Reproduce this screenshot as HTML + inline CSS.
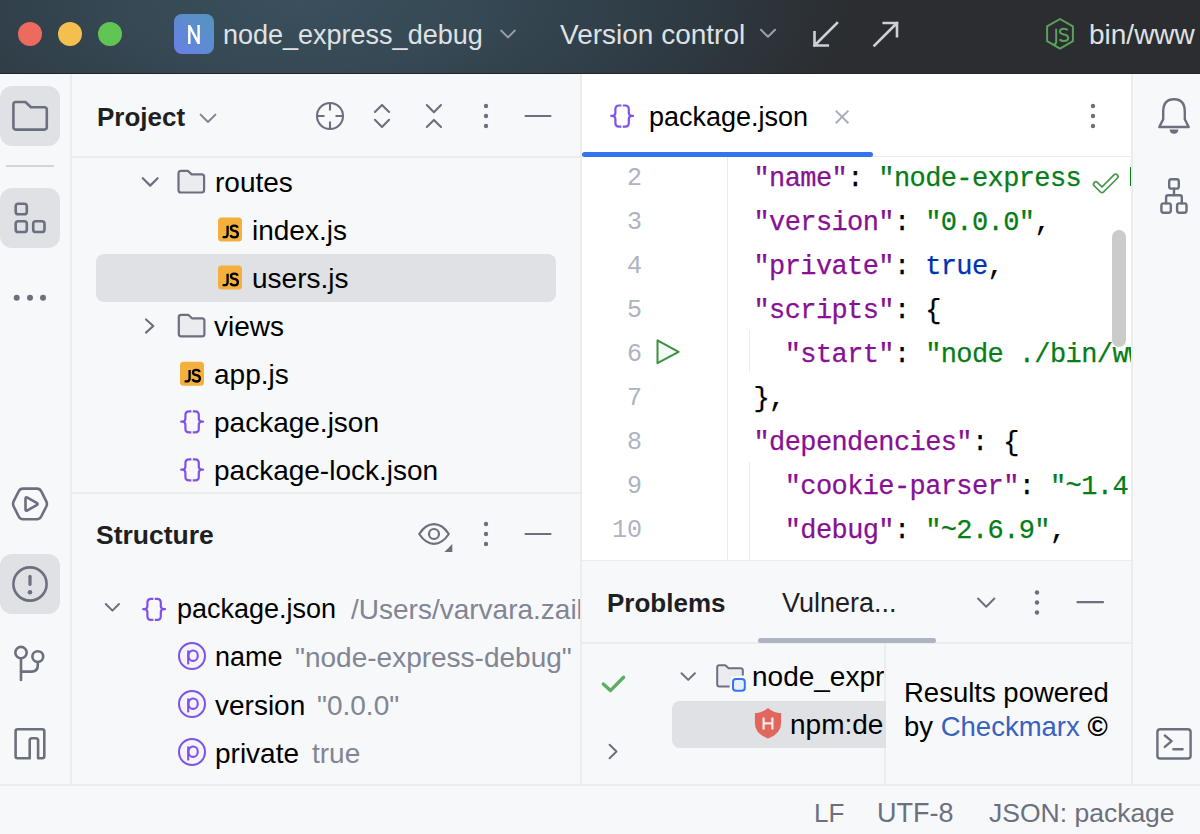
<!DOCTYPE html>
<html><head><meta charset="utf-8">
<style>
*{margin:0;padding:0;box-sizing:border-box}
html,body{width:1200px;height:834px;overflow:hidden;background:#f7f8fa;font-family:"Liberation Sans",sans-serif}
.a{position:absolute}
.t{position:absolute;white-space:nowrap;font-size:28px;line-height:1;color:#000}
.m{font-family:"Liberation Mono",monospace;font-size:27px;letter-spacing:-0.6px;white-space:pre;-webkit-text-stroke:0.25px currentColor}
.b{font-weight:bold;color:#1e1f22}
.g{color:#818594}
.lt{color:#dfe1e5}
#tgrad{left:0;top:0;width:1200px;height:73px;background:radial-gradient(ellipse 560px 230px at 300px 0px,#3a505c 0%,#364955 30%,#2f3c45 65%,#2b2d30 100%)}
.tl{position:absolute;top:22px;width:24px;height:24px;border-radius:50%}
.sel{position:absolute;background:#dfe1e5;border-radius:8px}
.code{position:absolute;left:582px;top:157px;width:549px;height:403px;overflow:hidden;background:#fff}
.ln{position:absolute;left:0;width:60px;text-align:right;color:#aeb3c2;font-size:25px!important;letter-spacing:0!important;-webkit-text-stroke:0!important}
.k{color:#871094}.s{color:#067d17}.kw{color:#0033b3}
</style></head><body>
<!-- ===== title bar ===== -->
<div class="a" style="left:0;top:0;width:1200px;height:74px;background:#2b2d30"></div>
<div id="tgrad" class="a"></div>
<div class="a" style="left:0;top:73px;width:1200px;height:1px;background:#232528"></div>
<div class="tl" style="left:18px;background:#ed6a5e"></div>
<div class="tl" style="left:58px;background:#f5bf4f"></div>
<div class="tl" style="left:98px;background:#61c554"></div>
<div class="a" style="left:174px;top:14px;width:40px;height:40px;border-radius:8px;background:linear-gradient(45deg,#6a80e6,#5296bd)"></div>

<div class="t lt" style="left:223px;top:22px;font-size:27px">node_express_debug</div>
<div class="t lt" style="left:560px;top:21px;font-size:28px">Version control</div>
<div class="t lt" style="left:1089px;top:21px;font-size:28px">bin/www</div>

<!-- ===== structural borders ===== -->
<div class="a" style="left:70px;top:74px;width:2px;height:711px;background:#ebecf0"></div>
<div class="a" style="left:580px;top:74px;width:2px;height:711px;background:#ebecf0"></div>
<div class="a" style="left:582px;top:74px;width:549px;height:486px;background:#fff"></div>
<div class="a" style="left:1131px;top:74px;width:2px;height:711px;background:#ebecf0"></div>
<div class="a" style="left:0;top:784px;width:1200px;height:2px;background:#ebecf0"></div>
<!-- project header bottom border -->
<div class="a" style="left:72px;top:156px;width:508px;height:2px;background:#ebecf0"></div>
<!-- structure top border -->
<div class="a" style="left:72px;top:492px;width:508px;height:2px;background:#ebecf0"></div>
<!-- editor tab bar bottom border -->
<div class="a" style="left:582px;top:156px;width:549px;height:1px;background:#ebecf0"></div>
<!-- problems top border -->
<div class="a" style="left:582px;top:559px;width:549px;height:2px;background:#ebecf0"></div>
<div class="a" style="left:582px;top:561px;width:549px;height:223px;background:#f7f8fa"></div>
<div class="a" style="left:582px;top:642px;width:549px;height:2px;background:#ebecf0"></div>
<div class="a" style="left:884px;top:644px;width:2px;height:140px;background:#ebecf0"></div>

<!-- ===== tool buttons ===== -->
<div class="sel" style="left:0;top:86px;width:60px;height:60px;border-radius:12px"></div>
<div class="a" style="left:6px;top:165px;width:48px;height:2px;background:#d3d5db"></div>
<div class="sel" style="left:0;top:188px;width:60px;height:60px;border-radius:12px"></div>
<div class="sel" style="left:0;top:554px;width:60px;height:60px;border-radius:12px"></div>

<!-- ===== project panel ===== -->
<div class="t b" style="left:97px;top:104px;font-size:26px">Project</div>
<div class="sel" style="left:96px;top:254px;width:460px;height:48px"></div>
<div class="t" style="left:215px;top:169px">routes</div>
<div class="t" style="left:252px;top:217px">index.js</div>
<div class="t" style="left:252px;top:265px">users.js</div>
<div class="t" style="left:214px;top:313px">views</div>
<div class="t" style="left:214px;top:361px">app.js</div>
<div class="t" style="left:214px;top:409px">package.json</div>
<div class="t" style="left:214px;top:457px">package-lock.json</div>



<!-- ===== editor tab ===== -->
<div class="t" style="left:649px;top:104px;font-size:27px">package.json</div>
<div class="a" style="left:582px;top:152px;width:291px;height:5px;border-radius:3px;background:#3574f0"></div>
<!-- ===== code ===== -->
<div class="code">
 <div class="a" style="left:145px;top:0;width:1px;height:403px;background:#ebecf0"></div>
 <div class="a" style="left:167px;top:173px;width:1px;height:43px;background:#ebecf0"></div>
 <div class="a" style="left:167px;top:305px;width:1px;height:98px;background:#ebecf0"></div>
 <div class="t m ln" style="top:9px">2</div>
 <div class="t m ln" style="top:53px">3</div>
 <div class="t m ln" style="top:97px">4</div>
 <div class="t m ln" style="top:141px">5</div>
 <div class="t m ln" style="top:185px">6</div>
 <div class="t m ln" style="top:229px">7</div>
 <div class="t m ln" style="top:273px">8</div>
 <div class="t m ln" style="top:317px">9</div>
 <div class="t m ln" style="top:361px">10</div>
 <div class="t m" style="left:171.5px;top:9px"><span class="k">"name"</span>: <span class="s">"node-express</span></div>
 <div class="t m" style="left:171.5px;top:53px"><span class="k">"version"</span>: <span class="s">"0.0.0"</span>,</div>
 <div class="t m" style="left:171.5px;top:97px"><span class="k">"private"</span>: <span class="kw">true</span>,</div>
 <div class="t m" style="left:171.5px;top:141px"><span class="k">"scripts"</span>: {</div>
 <div class="t m" style="left:171.5px;top:185px">  <span class="k">"start"</span>: <span class="s">"node ./bin/www"</span>,</div>
 <div class="t m" style="left:171.5px;top:229px">},</div>
 <div class="t m" style="left:171.5px;top:273px"><span class="k">"dependencies"</span>: {</div>
 <div class="t m" style="left:171.5px;top:317px">  <span class="k">"cookie-parser"</span>: <span class="s">"~1.4.4"</span>,</div>
 <div class="t m" style="left:171.5px;top:361px">  <span class="k">"debug"</span>: <span class="s">"~2.6.9"</span>,</div>
 <div class="a" style="left:548px;top:10px;width:3px;height:19px;background:#067d17"></div>
 <div class="a" style="left:530px;top:73px;width:14px;height:117px;border-radius:7px;background:#cbcbcb"></div>
</div>


<!-- ===== structure panel ===== -->
<div class="t b" style="left:96px;top:522px;font-size:26.5px">Structure</div>
<div class="t" style="left:177px;top:596px;font-size:27px">package.json</div>
<div class="t g" style="left:351px;top:596px;width:229px;overflow:hidden;font-size:28px">/Users/varvara.zaikina/node_express_debug</div>
<div class="t" style="left:215px;top:644px;font-size:27px">name</div>
<div class="t g" style="left:295px;top:644px;font-size:28px">"node-express-debug"</div>
<div class="t" style="left:215px;top:692px">version</div>
<div class="t g" style="left:317px;top:692px">"0.0.0"</div>
<div class="t" style="left:215px;top:740px">private</div>
<div class="t g" style="left:312px;top:740px">true</div>
<!-- ===== problems panel ===== -->
<div class="t b" style="left:607px;top:590px;font-size:26px">Problems</div>
<div class="t" style="left:782px;top:590px;font-size:27px;color:#1e1f22">Vulnera...</div>
<div class="a" style="left:758px;top:638px;width:178px;height:5px;border-radius:3px;background:#aeb3c2"></div>
<div class="sel" style="left:672px;top:701px;width:220px;height:47px"></div>
<div class="a" style="left:752px;top:660px;width:132px;height:40px;overflow:hidden"><div class="t" style="left:0;top:3px">node_express_debug</div></div>
<div class="a" style="left:790px;top:705px;width:94px;height:42px;overflow:hidden"><div class="t" style="left:0;top:6px">npm:debug</div></div>
<div class="a" style="left:886px;top:644px;width:245px;height:140px;background:#f7f8fa"></div>
<div class="t" style="left:904px;top:679px;font-size:27.5px;color:#000">Results powered</div>
<div class="t" style="left:904px;top:713px;font-size:27.5px;color:#000">by <span style="color:#3862bd">Checkmarx</span> <b>©</b></div>
<!-- ===== status bar ===== -->
<div class="t" style="left:814px;top:800px;font-size:26px;color:#6c707e">LF</div>
<div class="t" style="left:877px;top:800px;font-size:27px;color:#6c707e">UTF-8</div>
<div class="t" style="left:989px;top:800px;font-size:26.5px;color:#6c707e">JSON: package</div>

<!-- ===== icon overlay ===== -->
<svg class="a" style="left:0;top:0" width="1200" height="834" viewBox="0 0 1200 834">
<!-- title bar icons -->
<path d="M189.3,44 V25 M198.6,44 V25 M189.3,25.5 L198.6,43.5" stroke="#fff" stroke-width="2.5" fill="none"/>
<g fill="none" stroke="#9da0a8" stroke-width="2" stroke-linecap="round" stroke-linejoin="round">
 <path d="M501.2,30.6 L508,37.4 L514.8,30.6"/>
 <path d="M761,29.8 L768,36.8 L775,29.8"/>
</g>
<g fill="none" stroke="#ced0d6" stroke-width="2.6" stroke-linecap="square" stroke-linejoin="miter">
 <path d="M837,23 L814.5,45.5 M814.5,32.2 V45.5 H827.8"/>
 <path d="M874.5,45.5 L897,23 M883.7,23 H897 V36.3"/>
</g>
<g fill="none" stroke="#5aa25c" stroke-width="2" stroke-linejoin="round">
 <path d="M1060,19 L1072.9,26.4 V41.2 L1060,48.6 L1047.1,41.2 V26.4 Z"/>
 <path d="M1056.2,28.8 V41.4 Q1056.2,44.3 1053.5,44.3" />
 <path d="M1067.5,30.4 Q1066.8,28.8 1063.8,28.8 Q1059.9,28.8 1059.9,31.6 Q1059.9,33.9 1063.8,34.5 Q1068.2,35.2 1068.2,38.1 Q1068.2,41 1063.9,41 Q1060.5,41 1059.7,39.3"/>
</g>

<defs>
 <g id="json"><g fill="none" stroke="#7f52e8" stroke-width="2.2" stroke-linecap="butt" stroke-linejoin="round">
  <path d="M11.4,1.3 H9 Q5.4,1.3 5.4,4.9 V8.6 Q5.4,11.6 2.4,11.7 H1.2 H2.4 Q5.4,11.9 5.4,14.9 V18.8 Q5.4,22.4 9,22.4 H11.4"/>
  <path d="M12.8,1.3 H15.2 Q18.8,1.3 18.8,4.9 V8.6 Q18.8,11.6 21.8,11.7 H23 H21.8 Q18.8,11.9 18.8,14.9 V18.8 Q18.8,22.4 15.2,22.4 H12.8"/>
 </g></g>
 <g id="js"><rect x="0" y="0" width="24" height="24" rx="3.5" fill="#f4af3d"/>
  <path d="M9.6,8.2 V16.6 Q9.6,19.6 6.6,19.6 H4.6" fill="none" stroke="#000" stroke-width="2.3"/>
  <path d="M19.6,10.2 Q19.2,8.1 16.4,8.1 Q13,8.1 13,10.6 Q13,12.6 16.4,13.3 Q19.9,14 19.9,16.6 Q19.9,19.7 16.3,19.7 Q13.1,19.7 12.6,17.3" fill="none" stroke="#000" stroke-width="2.3"/>
 </g>
 <g id="folder"><path d="M1.2,3.6 Q1.2,1.2 3.6,1.2 H10.6 L14.4,4.7 H24.4 Q26.8,4.7 26.8,7.1 V20.4 Q26.8,22.8 24.4,22.8 H3.6 Q1.2,22.8 1.2,20.4 Z" fill="#ebecf0" stroke="#6c707e" stroke-width="2.2" stroke-linejoin="round"/></g>
 <g id="prop"><circle cx="14" cy="14" r="13" fill="#f5f3fe" stroke="#7f52e8" stroke-width="2"/>
  <path d="M10.2,22.4 V8.4" stroke="#7f52e8" stroke-width="2.1" fill="none"/>
  <ellipse cx="15.1" cy="13.7" rx="4.7" ry="5.2" fill="none" stroke="#7f52e8" stroke-width="2.1"/>
 </g>
</defs>
<g fill="none" stroke="#6c707e" stroke-width="2.6" stroke-linecap="round" stroke-linejoin="round">
 <!-- left strip -->
 <path d="M13.4,104.5 Q13.4,102 15.9,102 H25.4 L31,107.3 H44.3 Q46.8,107.3 46.8,109.8 V127.1 Q46.8,129.6 44.3,129.6 H15.9 Q13.4,129.6 13.4,127.1 Z"/>
 <rect x="15.7" y="203.7" width="11.1" height="10.6" rx="2.6"/>
 <rect x="15.7" y="221.2" width="11.1" height="10.8" rx="2.6"/>
 <rect x="33.2" y="221.2" width="11.3" height="10.8" rx="2.6"/>
 <path d="M18.7,491.3 Q20.0,488.6 23.0,488.6 L36.9,488.6 Q39.9,488.6 41.3,491.3 L46.2,501.1 Q47.6,503.8 46.3,506.5 L41.2,516.5 Q39.9,519.2 36.9,519.2 L23.0,519.2 Q20.0,519.2 18.7,516.5 L13.7,506.5 Q12.4,503.8 13.7,501.1 Z"/>
 <path d="M25.5,498.7 Q25.5,496.5 27.4,497.6 L36.7,502.9 Q38.6,504.0 36.7,505.1 L27.4,510.4 Q25.5,511.5 25.5,509.3 Z"/>
 <circle cx="30" cy="584" r="16.6"/>
 <path d="M30,576.3 V584.3" stroke-width="3.2"/>
 <path d="M21,659 V680"/>
 <circle cx="21" cy="652.6" r="5.7"/>
 <circle cx="37.8" cy="656.6" r="5.4"/>
 <path d="M37.8,662.2 V665.2 Q37.8,671.6 31.4,671.6 H21"/>
 <path d="M29.7,758.3 H17.6 Q15.6,758.3 15.6,756.3 V731.2 Q15.6,729.2 17.6,729.2 H42.3 Q44.3,729.2 44.3,731.2 V756.3 Q44.3,758.3 42.3,758.3 H38.1 V740.4 Q38.1,738.2 35.9,738.2 H31.9 Q29.7,738.2 29.7,740.4 Z"/>
 <!-- project header -->
 <g stroke-width="2.1">
 <circle cx="330" cy="116" r="13"/>
 <path d="M330,103.5 V110.5 M330,121.5 V128.5 M317.5,116 H324.5 M335.5,116 H342.5" stroke-linecap="butt"/>
 <path d="M374.9,112 L382,104.9 L389.1,112 M374.9,119.8 L382,126.9 L389.1,119.8"/>
 <path d="M426.8,105.1 L433.9,112.2 L441,105.1 M426.8,127 L433.9,119.9 L441,127"/>
 <path d="M525.5,116 H550.5"/>
 </g>
 <path d="M200.6,114.6 L208,122 L215.4,114.6" stroke-width="2" stroke="#818594"/>
 <!-- tree chevrons -->
 <path d="M142.8,178.2 L150.2,185.6 L157.6,178.2" stroke-width="2.2"/>
 <path d="M146,319.5 L153.3,326 L146,332.6" stroke-width="2.2"/>
</g>
<g fill="#6c707e">
 <circle cx="16.7" cy="297.8" r="3"/><circle cx="30" cy="297.8" r="3"/><circle cx="43" cy="297.8" r="3"/>
 <circle cx="30" cy="592.2" r="2.3"/>
 <circle cx="486" cy="106" r="2.2"/><circle cx="486" cy="116" r="2.2"/><circle cx="486" cy="126" r="2.2"/>
</g>

<g fill="none" stroke="#6c707e" stroke-width="2.4" stroke-linecap="round" stroke-linejoin="round">
 <!-- right strip -->
 <path d="M1159.3,127 L1163.2,119.2 V111.8 Q1163.2,99.3 1174,99.3 Q1184.8,99.3 1184.8,111.8 V119.2 L1188.7,127 Z"/>
 <rect x="1169.2" y="179.2" width="9.6" height="9.4" rx="2.2"/>
 <rect x="1161.4" y="203.4" width="9.4" height="9.4" rx="2.2"/>
 <rect x="1177.1" y="203.4" width="9.4" height="9.4" rx="2.2"/>
 <path d="M1174,188.6 V195.2 M1166.1,203.4 V197.2 Q1166.1,195.2 1168.1,195.2 H1179.8 Q1181.8,195.2 1181.8,197.2 V203.4"/>
 <rect x="1157.4" y="729.3" width="33.2" height="29.2" rx="2.8"/>
 <path d="M1164.8,735.5 L1171.6,741.2 L1164.8,746.9 M1173.4,749.3 H1182.6"/>
</g>
<path d="M1169.6,129.6 H1178.4 Q1178.2,133.8 1174,133.8 Q1169.8,133.8 1169.6,129.6 Z" fill="#6c707e"/>
<!-- editor tab -->
<use href="#json" x="610" y="104.2"/>
<path d="M835.8,110.6 L848.4,123.2 M848.4,110.6 L835.8,123.2" stroke="#a8adbd" stroke-width="2" fill="none"/>
<g fill="#6c707e"><circle cx="1093" cy="106" r="2.2"/><circle cx="1093" cy="116" r="2.2"/><circle cx="1093" cy="126" r="2.2"/></g>
<!-- run gutter icon -->
<path d="M657.5,340.4 V363.2 L678.6,351.8 Z" fill="#f2fcf3" stroke="#3d8f44" stroke-width="2" stroke-linejoin="round"/>
<!-- inlay double check -->
<path d="M1095.9,184.2 L1102,190.2 L1115.6,176.6" fill="none" stroke="#4c9a51" stroke-width="6.4" stroke-linecap="round" stroke-linejoin="round"/><path d="M1095.9,184.2 L1102,190.2 L1115.6,176.6" fill="none" stroke="#fff" stroke-width="3" stroke-linecap="round" stroke-linejoin="round"/>


<!-- structure header -->
<g fill="none" stroke="#6c707e" stroke-width="2.2" stroke-linecap="round" stroke-linejoin="round">
 <path d="M419.2,534 C423.5,527.5 428.5,524.2 434,524.2 C439.5,524.2 444.5,527.5 448.8,534 C444.5,540.5 439.5,543.8 434,543.8 C428.5,543.8 423.5,540.5 419.2,534 Z"/>
 <circle cx="434" cy="534" r="5"/>
 <path d="M525.5,534 H550.5"/>
 <path d="M105.8,604 L112.4,610.6 L119,604" stroke-width="2"/>
 <!-- problems header -->
 <path d="M978,598.5 L986.2,606.7 L994.4,598.5" stroke-width="2"/>
 <path d="M1077.5,602.2 H1103"/>
 <path d="M681.5,673.2 L688.2,679.9 L694.9,673.2" stroke-width="2"/>
 <path d="M609.6,744.8 L616.5,751.5 L609.6,758.2" stroke-width="2"/>
</g>
<path d="M444.4,552 L452.3,544 V552 Z" fill="#6c707e"/>
<g fill="#6c707e">
 <circle cx="486" cy="524" r="2.2"/><circle cx="486" cy="534" r="2.2"/><circle cx="486" cy="544" r="2.2"/>
 <circle cx="1037" cy="592.5" r="2.2"/><circle cx="1037" cy="602.5" r="2.2"/><circle cx="1037" cy="612.5" r="2.2"/>
</g>
<use href="#json" x="142" y="597.5"/>
<use href="#prop" x="178" y="642"/>
<use href="#prop" x="178" y="690"/>
<use href="#prop" x="178" y="738"/>
<!-- green check -->
<path d="M603.3,684 L610.4,690.6 L623.6,677.3" fill="none" stroke="#5fad65" stroke-width="3.4" stroke-linecap="round" stroke-linejoin="round"/>
<!-- folder with module badge -->
<path d="M717.2,667.5 Q717.2,665.3 719.4,665.3 H725.3 L728.6,668.3 H740.6 Q742.8,668.3 742.8,670.5 V676 H731 V686.4 H719.4 Q717.2,686.4 717.2,684.2 Z" fill="#ebecf0"/>
<path d="M729.6,686.4 H719.4 Q717.2,686.4 717.2,684.2 V667.5 Q717.2,665.3 719.4,665.3 H725.3 L728.6,668.3 H740.6 Q742.8,668.3 742.8,670.5 V675.5" fill="none" stroke="#6c707e" stroke-width="2" stroke-linejoin="round"/>
<rect x="733" y="678.9" width="11.8" height="11.8" rx="3" fill="#e7effd" stroke="#3574f0" stroke-width="2"/>
<!-- shield -->
<path d="M768,707.9 Q773.5,712.8 781.1,713.2 V723.2 Q781.1,733.5 768,738.6 Q754.9,733.5 754.9,723.2 V713.2 Q762.5,712.8 768,707.9 Z" fill="#e1665b"/>
<path d="M763.6,717.6 V729.4 M772.4,717.6 V729.4 M763.6,723.3 H772.4" stroke="#f7ecec" stroke-width="2.2" fill="none"/>

<use href="#folder" x="177.3" y="169.7"/>
<use href="#folder" x="177.6" y="313.6"/>
<use href="#js" x="218" y="217.6"/>
<use href="#js" x="218" y="265.6"/>
<use href="#js" x="180" y="361.8"/>
<use href="#json" x="180" y="410"/>
<use href="#json" x="180" y="458"/>
</svg>

</body></html>
